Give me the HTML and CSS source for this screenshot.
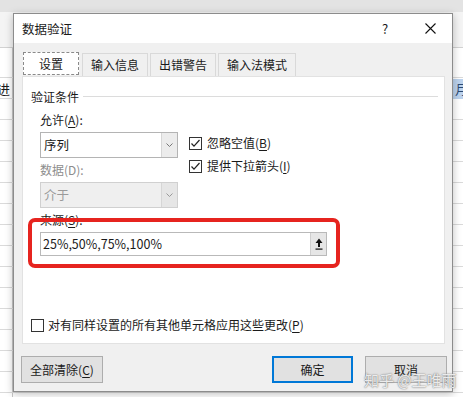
FILE: index.html
```html
<!DOCTYPE html>
<html lang="zh-CN">
<head>
    <meta charset="UTF-8">
    <title>数据验证</title>
    <link rel="stylesheet" href="styles.css">
</head>
<body>
    <div class="topbar"></div>
    <div class="sheet-cell cell-left">进</div>
    <div class="sheet-cell cell-right">月</div>

    <div class="dialog">
        <div class="titlebar">
            <span class="title">数据验证</span>
            <span class="help">?</span>
            <svg class="close" width="11" height="11" viewBox="0 0 11 11">
                <path d="M0.5 0.5 L10.5 10.5 M10.5 0.5 L0.5 10.5" stroke="#111" stroke-width="1.1" fill="none"/>
            </svg>
        </div>

        <div class="body">
            <div class="tabs">
                <div class="tab active">设置</div>
                <div class="tab tab-info">输入信息</div>
                <div class="tab tab-warn">出错警告</div>
                <div class="tab tab-ime">输入法模式</div>
            </div>

            <div class="panel">
                <div class="legend">
                    <span>验证条件</span>
                    <span class="legend-line"></span>
                </div>

                <div class="group">
                    <div class="label allow-label">允许(<u>A</u>):</div>
                    <div class="select select-allow">
                        <span class="select-text">序列</span>
                        <span class="select-btn">
                            <svg width="7" height="4" viewBox="0 0 7 4"><path d="M0.5 0.5 L3.5 3.5 L6.5 0.5" stroke="#777" fill="none"/></svg>
                        </span>
                    </div>
                    <div class="checks">
                        <label class="check">
                            <span class="box">
                                <svg width="11" height="11" viewBox="0 0 11 11"><path d="M1.5 5.5 L4 8.2 L9.5 2" stroke="#222" stroke-width="1.2" fill="none"/></svg>
                            </span>
                            <span>忽略空值(<u>B</u>)</span>
                        </label>
                        <label class="check">
                            <span class="box">
                                <svg width="11" height="11" viewBox="0 0 11 11"><path d="M1.5 5.5 L4 8.2 L9.5 2" stroke="#222" stroke-width="1.2" fill="none"/></svg>
                            </span>
                            <span>提供下拉箭头(<u>I</u>)</span>
                        </label>
                    </div>
                    <div class="label disabled">数据(D):</div>
                    <div class="select select-disabled">
                        <span class="select-text">介于</span>
                        <span class="select-btn">
                            <svg width="7" height="4" viewBox="0 0 7 4"><path d="M0.5 0.5 L3.5 3.5 L6.5 0.5" stroke="#999" fill="none"/></svg>
                        </span>
                    </div>
                    <div class="label">来源(<u>S</u>):</div>
                    <div class="source">
                        <span class="source-text">25%,50%,75%,100%</span>
                        <span class="source-btn">
                            <svg width="8" height="12" viewBox="0 0 8 12">
                                <path d="M4 0.5 L7.5 5 L5 5 L5 9 L3 9 L3 5 L0.5 5 Z" fill="#111"/>
                                <rect x="0.5" y="10.5" width="7" height="1.2" fill="#111"/>
                            </svg>
                        </span>
                    </div>
                </div>

                <label class="check apply">
                    <span class="box"></span>
                    <span>对有同样设置的所有其他单元格应用这些更改(<u>P</u>)</span>
                </label>

                <div class="highlight"></div>
            </div>

            <div class="buttons">
                <button class="btn clear">全部清除(<u>C</u>)</button>
                <button class="btn ok">确定</button>
                <button class="btn cancel">取消</button>
            </div>

            <div class="watermark">知乎 @王唯雨</div>
        </div>
    </div>
</body>
</html>
```

FILE: styles.css
```css
* {
    box-sizing: border-box;
}
body {
    margin: 0;
    width: 463px;
    height: 397px;
    overflow: hidden;
    position: relative;
    font-family: "Noto Sans CJK SC", "Microsoft YaHei", sans-serif;
    font-size: 12px;
    line-height: 16px;
    color: #1a1a1a;
    background-color: #fff;
    background-image:
        linear-gradient(to bottom, #f4f4f4 0, #f4f4f4 47px, #d2d2d2 47px, #d2d2d2 48px, transparent 48px),
        repeating-linear-gradient(to bottom, transparent 0, transparent 20px, #dadada 20px, #dadada 21px),
        linear-gradient(to right, transparent 12px, #c8c8c8 12px, #c8c8c8 13px, transparent 13px);
    background-position: 0 0, 0 57px, 0 0;
    background-repeat: no-repeat, repeat-x, no-repeat;
    background-size: 100% 48px, 100% 100%, 100% 100%;
}
u {
    text-decoration: underline;
    text-underline-offset: 2px;
}

.topbar {
    height: 12px;
    background: #e3e3e3;
}
.sheet-cell {
    position: absolute;
    top: 79px;
    height: 20px;
    line-height: 20px;
    font-size: 13px;
}
.cell-left {
    left: -3px;
}
.cell-right {
    left: 453px;
    width: 10px;
    padding-left: 2px;
    background: #bcd3ee;
    color: #2c4a73;
    overflow: hidden;
}

/* Dialog */
.dialog {
    position: relative;
    width: 440px;
    height: 379px;
    margin: 1px 0 0 13px;
    border: 1px solid #8c8c8c;
    background: #f0f0f0;
    box-shadow: 0 2px 8px rgba(0,0,0,0.25);
}
.titlebar {
    display: flex;
    align-items: center;
    height: 29px;
    padding-left: 8px;
    background: #fff;
}
.title {
    flex: 1;
    font-size: 12.5px;
}
.help {
    width: 10px;
    font-size: 13px;
    margin-right: 33px;
}
.close {
    margin-right: 16px;
}

.body {
    padding: 9px 7px 0 8px;
}

.tabs {
    display: flex;
    align-items: flex-end;
    height: 24px;
    padding-left: 1px;
}
.tab {
    height: 23px;
    line-height: 21px;
    text-align: center;
    border: 1px solid #d9d9d9;
    border-bottom: none;
    background: #f0f0f0;
    margin-left: 2px;
}
.tab.active {
    width: 56px;
    height: 23px;
    margin-left: 0;
    background: #fff;
    border: 1px dashed #8a8a8a;
    margin-bottom: 1px;
    line-height: 21px;
}
.tab-info {
    width: 66px;
    margin-left: 3px;
}
.tab-warn {
    width: 66px;
}
.tab-ime {
    width: 78px;
}

.panel {
    position: relative;
    height: 268px;
    background: #fff;
    border: 1px solid #e2e2e2;
    padding: 12px 6px 0 8px;
}
.legend {
    display: flex;
    align-items: center;
    height: 16px;
}
.legend-line {
    flex: 1;
    height: 1px;
    margin-left: 4px;
    margin-top: -2px;
    background: #dcdcdc;
}

.group {
    display: grid;
    grid-template-columns: 138px 1fr;
    column-gap: 11px;
    padding-left: 9px;
}
.label {
    grid-column: 1;
    margin-top: 4px;
    margin-bottom: 4px;
}
.allow-label {
    margin-top: 7px;
}
.disabled {
    color: #8d8d8d;
}
.select {
    grid-column: 1;
    display: flex;
    height: 26px;
    border: 1px solid #b4b4b4;
    background: #fff;
}
.select-text {
    flex: 1;
    padding-left: 3px;
    line-height: 24px;
    font-size: 12.5px;
}
.select-btn {
    display: flex;
    align-items: center;
    justify-content: center;
    width: 16px;
    background: #ececec;
    border-left: 1px solid #d6d6d6;
}
.select-disabled {
    background: #efefef;
    border-color: #d0d0d0;
    color: #9a9a9a;
}
.select-disabled .select-btn {
    background: #e6e6e6;
}

.checks {
    grid-column: 2;
    grid-row: 2 / 5;
    display: flex;
    flex-direction: column;
    gap: 7px;
    padding-top: 3px;
}
.check {
    display: flex;
    align-items: center;
    gap: 5px;
    height: 16px;
}
.box {
    display: flex;
    align-items: center;
    justify-content: center;
    width: 13px;
    height: 13px;
    border: 1px solid #333;
    background: #fff;
}

.source {
    grid-column: 1 / 3;
    display: flex;
    width: 287px;
    height: 24px;
    border: 1px solid #b9b9b9;
}
.source-text {
    flex: 1;
    padding-left: 2px;
    line-height: 22px;
    font-size: 12.5px;
}
.source-btn {
    display: flex;
    align-items: center;
    justify-content: center;
    width: 16px;
    background: #e6e6e6;
    border-left: 1px solid #cfcfcf;
}

.apply {
    margin-top: 61px;
    gap: 4px;
}

.highlight {
    position: absolute;
    left: 5px;
    top: 141px;
    width: 312px;
    height: 50px;
    border: 4px solid #e6241f;
    border-radius: 7px;
}

.buttons {
    display: flex;
    margin: 12px -2px 0 -1px;
}
.btn {
    width: 82px;
    height: 27px;
    padding: 0;
    font-family: inherit;
    font-size: 12px;
    color: #1a1a1a;
    background: #e1e1e1;
    border: 1px solid #adadad;
}
.ok {
    margin-left: auto;
    width: 81px;
    border: 2px solid #0078d7;
}
.cancel {
    margin-left: 12px;
}

.watermark {
    position: absolute;
    right: 0;
    bottom: 1px;
    width: 88px;
    font-size: 15px;
    line-height: 20px;
    color: rgba(255,255,255,0.85);
    text-shadow: 0 0 1px #777, 0 0 2px #999;
    white-space: nowrap;
}
```
